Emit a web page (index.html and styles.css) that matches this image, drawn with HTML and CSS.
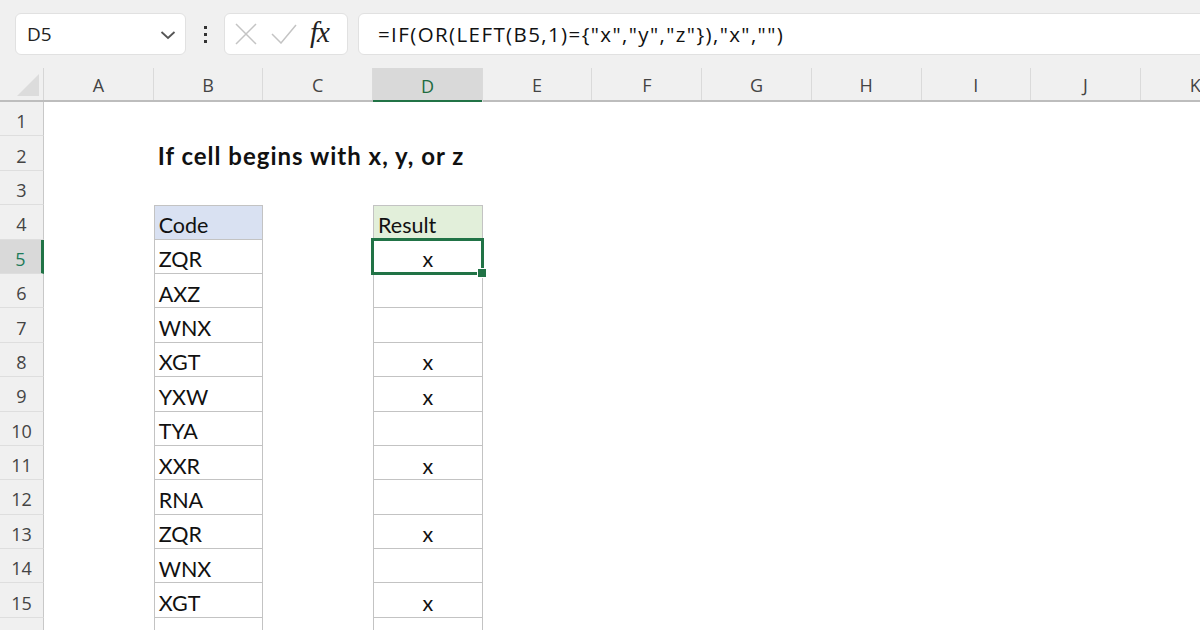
FILE: index.html
```html
<!DOCTYPE html>
<html lang="en">
<head>
    <meta charset="UTF-8">
    <title>If cell begins with x, y, or z</title>
    <link rel="stylesheet" href="styles.css">
</head>
<body>
    <div class="toolbar">
        <div class="namebox">
            <span>D5</span>
            <svg class="chevron" width="16" height="10" viewBox="0 0 16 10"><path d="M1.5 2 L8 8 L14.5 2" fill="none" stroke="#555" stroke-width="1.8"/></svg>
        </div>
        <div class="dots"><i></i><i></i><i></i></div>
        <div class="fxbox">
            <svg width="24" height="22" viewBox="0 0 24 22"><path d="M2 1 L22 21 M22 1 L2 21" stroke="#c4c4c4" stroke-width="1.5"/></svg>
            <svg width="26" height="20" viewBox="0 0 26 20"><path d="M1 10 L10 19 L25 1" fill="none" stroke="#c4c4c4" stroke-width="1.5"/></svg>
            <span class="fx">fx</span>
        </div>
        <div class="formula">=IF(OR(LEFT(B5,1)={"x","y","z"}),"x","")</div>
    </div>

    <div class="sheet">
        <div class="row colheads">
            <div class="corner"></div>
            <div class="colh">A</div>
            <div class="colh">B</div>
            <div class="colh">C</div>
            <div class="colh active">D</div>
            <div class="colh">E</div>
            <div class="colh">F</div>
            <div class="colh">G</div>
            <div class="colh">H</div>
            <div class="colh">I</div>
            <div class="colh">J</div>
            <div class="colh">K</div>
        </div>

        <div class="row"><div class="rh">1</div></div>
        <div class="row"><div class="rh">2</div><div class="c"></div><div class="c title">If cell begins with x, y, or z</div></div>
        <div class="row"><div class="rh">3</div></div>
        <div class="row"><div class="rh">4</div><div class="c"></div><div class="c code top hd-blue">Code</div><div class="c"></div><div class="c res top hd-green">Result</div></div>
        <div class="row"><div class="rh active">5</div><div class="c"></div><div class="c code">ZQR</div><div class="c"></div><div class="c res sel">x<span class="handle"></span></div></div>
        <div class="row"><div class="rh">6</div><div class="c"></div><div class="c code">AXZ</div><div class="c"></div><div class="c res"></div></div>
        <div class="row"><div class="rh">7</div><div class="c"></div><div class="c code">WNX</div><div class="c"></div><div class="c res"></div></div>
        <div class="row"><div class="rh">8</div><div class="c"></div><div class="c code">XGT</div><div class="c"></div><div class="c res">x</div></div>
        <div class="row"><div class="rh">9</div><div class="c"></div><div class="c code">YXW</div><div class="c"></div><div class="c res">x</div></div>
        <div class="row"><div class="rh">10</div><div class="c"></div><div class="c code">TYA</div><div class="c"></div><div class="c res"></div></div>
        <div class="row"><div class="rh">11</div><div class="c"></div><div class="c code">XXR</div><div class="c"></div><div class="c res">x</div></div>
        <div class="row"><div class="rh">12</div><div class="c"></div><div class="c code">RNA</div><div class="c"></div><div class="c res"></div></div>
        <div class="row"><div class="rh">13</div><div class="c"></div><div class="c code">ZQR</div><div class="c"></div><div class="c res">x</div></div>
        <div class="row"><div class="rh">14</div><div class="c"></div><div class="c code">WNX</div><div class="c"></div><div class="c res"></div></div>
        <div class="row"><div class="rh">15</div><div class="c"></div><div class="c code">XGT</div><div class="c"></div><div class="c res">x</div></div>
        <div class="row"><div class="rh">16</div><div class="c"></div><div class="c code">YXT</div><div class="c"></div><div class="c res"></div></div>
    </div>
</body>
</html>
```

FILE: styles.css
```css
/* Excel-like sheet */
body {
    margin: 0;
    background: #fff;
    font-family: "Open Sans", "Noto Sans", sans-serif;
    overflow: hidden;
}

.toolbar {
    height: 68px;
    background: #f0f0f0;
    display: flex;
    align-items: flex-start;
    padding: 13px 0 0 15px;
    box-sizing: border-box;
}

.namebox,
.fxbox,
.formula {
    height: 42px;
    background: #fff;
    border: 1px solid #e1e1e1;
    border-radius: 6px;
    box-sizing: border-box;
    display: flex;
    align-items: center;
}

.namebox {
    width: 171px;
    padding: 0 9px 0 11px;
    justify-content: space-between;
    font-size: 19px;
    color: #222;
}

.chevron {
    margin-top: 2px;
}

.dots {
    width: 38px;
    height: 42px;
    display: flex;
    flex-direction: column;
    align-items: center;
    justify-content: center;
    gap: 4px;
}

.dots i {
    width: 3px;
    height: 3px;
    background: #333;
}

.fxbox {
    width: 124px;
    padding: 0 8px 0 9px;
    gap: 13px;
}

.fx {
    font-family: "Liberation Serif", serif;
    font-style: italic;
    font-size: 29px;
    color: #222;
    margin-top: -3px;
    letter-spacing: -1px;
}

.formula {
    flex: 1;
    margin-left: 10px;
    margin-right: -20px;
    padding-left: 19px;
    font-size: 20.5px;
    letter-spacing: 1.4px;
    color: #111;
}

/* grid */
.row {
    display: grid;
    grid-template-columns: 44px repeat(11, 109.7px);
    height: 34.4px;
}

.colheads {
    height: 34px;
    background: #f0f0f0;
    border-bottom: 2px solid #bdbdbd;
    box-sizing: border-box;
}

.corner {
    position: relative;
    border-right: 1px solid #d6d6d6;
}

.corner::after {
    content: "";
    position: absolute;
    right: 4px;
    bottom: 4px;
    border-left: 22px solid transparent;
    border-bottom: 22px solid #dcdcdc;
}

.colh {
    display: flex;
    align-items: center;
    justify-content: center;
    padding-top: 2px;
    font-size: 18px;
    color: #444;
    border-right: 1px solid #dadada;
}

.colh.active {
    background: #d9d9d9;
    color: #1e6b3f;
    box-shadow: inset 0 -2px 0 #217346;
    margin-bottom: -2px;
}

.rh {
    background: #f0f0f0;
    border-right: 1px solid #c8c8c8;
    border-bottom: 1px solid #dedede;
    display: flex;
    align-items: center;
    justify-content: center;
    padding-top: 5px;
    box-sizing: border-box;
    font-size: 18px;
    color: #444;
}

.rh.active {
    background: #d9d9d9;
    color: #1e7b5a;
    border-right: 3px solid #217346;
}

.c {
    font-family: Lato, "Liberation Sans", sans-serif;
    font-size: 21.5px;
    color: #111;
    display: flex;
    align-items: center;
    padding: 6px 0 0 4px;
    box-sizing: border-box;
    white-space: nowrap;
}

.title {
    font-weight: bold;
    font-size: 24px;
    letter-spacing: 1px;
    padding-top: 4px;
}

.code,
.res {
    border: 1px solid #c3c3c3;
    border-top: none;
}

.top {
    border-top: 1px solid #c3c3c3;
}

.res {
    justify-content: center;
    padding-left: 0;
}

.hd-blue {
    background: #d9e1f2;
}

.hd-green {
    background: #e2efda;
    justify-content: flex-start;
    padding-left: 4px;
}

.sel {
    position: relative;
}

.sel::after {
    content: "";
    position: absolute;
    left: -3px;
    top: -2px;
    right: -2px;
    bottom: -2px;
    border: 3px solid #217346;
}

.handle {
    position: absolute;
    right: -5px;
    bottom: -5px;
    width: 8px;
    height: 8px;
    background: #217346;
    border: 1px solid #fff;
    z-index: 1;
}
```
